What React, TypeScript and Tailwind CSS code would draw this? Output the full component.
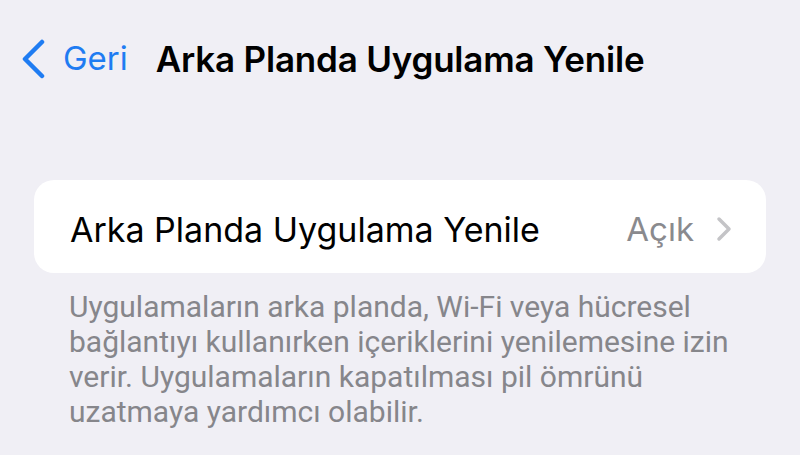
import React from "react";

export default function App() {
  return (
    <div
      className="w-[800px] h-[455px] bg-[#f0eff5] overflow-hidden"
      style={{ fontFamily: "Inter, 'Noto Sans', sans-serif" }}
    >
      {/* navigation bar */}
      <div className="flex items-center h-[60px] mt-[29px] pl-[20px]">
        <svg width="26" height="40" viewBox="0 0 26 40" className="shrink-0">
          <path
            d="M22 3 L5 20 L22 37"
            fill="none"
            stroke="#1f7cf2"
            strokeWidth="4.5"
            strokeLinecap="round"
            strokeLinejoin="round"
          />
        </svg>
        <span className="ml-[17px] text-[33px] text-[#1f7cf2]">Geri</span>
        <span className="ml-[28px] text-[35px] font-semibold text-black tracking-[-0.2px]">
          Arka Planda Uygulama Yenile
        </span>
      </div>

      {/* settings group */}
      <div className="mx-[34px] mt-[91px] h-[93px] bg-white rounded-[20px] flex items-center pl-[36px] pr-[34px]">
        <span className="flex-1 text-[34px] text-black pt-[6px]">Arka Planda Uygulama Yenile</span>
        <span className="text-[33px] text-[#8a8a8e] pt-[6px]">Açık</span>
        <svg width="16" height="26" viewBox="0 0 16 26" className="ml-[22px] mt-[4px]">
          <path
            d="M3 3 L13 13 L3 23"
            fill="none"
            stroke="#c4c4c7"
            strokeWidth="3.5"
            strokeLinecap="round"
            strokeLinejoin="round"
          />
        </svg>
      </div>

      {/* footer note */}
      <div
        className="ml-[69px] mt-[16px] text-[30px] leading-[35px] text-[#86868b] flex flex-col"
        style={{ fontFamily: "Roboto, sans-serif" }}
      >
        <span>Uygulamaların arka planda, Wi-Fi veya hücresel</span>
        <span>bağlantıyı kullanırken içeriklerini yenilemesine izin</span>
        <span>verir. Uygulamaların kapatılması pil ömrünü</span>
        <span>uzatmaya yardımcı olabilir.</span>
      </div>
    </div>
  );
}
